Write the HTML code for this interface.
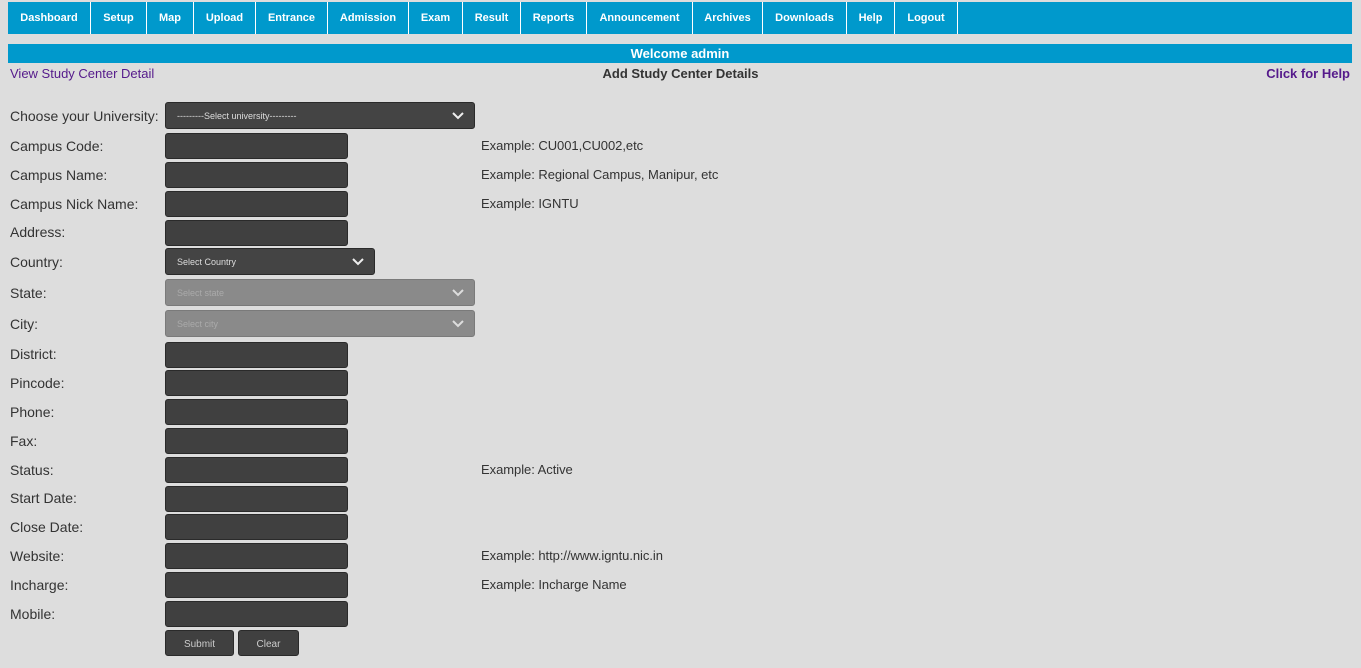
<!DOCTYPE html>
<html><head><style>
body{margin:0;width:1361px;height:668px;background:#dddddd;font-family:"Liberation Sans",sans-serif;position:relative;overflow:hidden}
.nav{position:absolute;left:8px;top:2px;width:1344px;height:32px;background:#0099cc}
.nav span{position:absolute;top:0;height:32px;line-height:33px;color:#fff;font-weight:bold;font-size:11px;text-align:center;border-right:1px solid #fff}
.a{position:absolute}
.lbl{position:absolute;left:10px;font-size:14px;color:#333}
.inp{position:absolute;left:165px;width:181px;height:24px;background:#404040;border:1px solid #2a2a2a;border-radius:3px}
.sel{position:absolute;left:165px;height:25px;background:#444;border:1px solid #2a2a2a;border-radius:3px;color:#ddd;font-size:9px;line-height:27px;padding-left:11px;box-sizing:content-box}
.sel.dis{background:#8a8a8a;border-color:#7a7a7a;color:#aaa}
.sel svg{position:absolute;right:10px;top:9px}
.ex{position:absolute;left:481px;font-size:13px;color:#333;letter-spacing:-0.05px}
.btn{position:absolute;top:630px;height:24px;background:#404040;border:1px solid #2a2a2a;border-radius:3px;color:#ccc;font-size:10px;text-align:center;line-height:27px}
</style></head><body>
<div class="nav">
<span style="left:0;width:82px">Dashboard</span>
<span style="left:83px;width:55px">Setup</span>
<span style="left:139px;width:46px">Map</span>
<span style="left:186px;width:61px">Upload</span>
<span style="left:248px;width:71px">Entrance</span>
<span style="left:320px;width:80px">Admission</span>
<span style="left:401px;width:53px">Exam</span>
<span style="left:455px;width:57px">Result</span>
<span style="left:513px;width:65px">Reports</span>
<span style="left:579px;width:105px">Announcement</span>
<span style="left:685px;width:69px">Archives</span>
<span style="left:755px;width:83px">Downloads</span>
<span style="left:839px;width:47px">Help</span>
<span style="left:887px;width:62px">Logout</span>
</div>
<div class="a" style="left:8px;top:44px;width:1344px;height:19px;background:#0099cc;color:#fff;font-weight:bold;font-size:13px;text-align:center;line-height:20px">Welcome admin</div>
<div class="a" style="left:10px;top:66px;font-size:13px;color:#551a8b">View Study Center Detail</div>
<div class="a" style="left:0;width:1361px;top:66px;font-size:13px;font-weight:bold;color:#333;text-align:center">Add Study Center Details</div>
<div class="a" style="right:11px;top:66px;font-size:13px;font-weight:bold;color:#551a8b">Click for Help</div>

<div class="lbl" style="top:108px">Choose your University:</div>
<div class="sel" style="top:102px;width:297px">---------Select university---------<svg width="12" height="8"><path d="M1 1l5 5 5-5" stroke="#eee" stroke-width="2" fill="none"/></svg></div>

<div class="lbl" style="top:138px">Campus Code:</div><div class="inp" style="top:133px"></div><div class="ex" style="top:138px">Example: CU001,CU002,etc</div>
<div class="lbl" style="top:167px">Campus Name:</div><div class="inp" style="top:162px"></div><div class="ex" style="top:167px">Example: Regional Campus, Manipur, etc</div>
<div class="lbl" style="top:196px">Campus Nick Name:</div><div class="inp" style="top:191px"></div><div class="ex" style="top:196px">Example: IGNTU</div>
<div class="lbl" style="top:224px">Address:</div><div class="inp" style="top:220px"></div>
<div class="lbl" style="top:254px">Country:</div>
<div class="sel" style="top:248px;width:197px">Select Country<svg width="12" height="8"><path d="M1 1l5 5 5-5" stroke="#eee" stroke-width="2" fill="none"/></svg></div>
<div class="lbl" style="top:285px">State:</div>
<div class="sel dis" style="top:279px;width:297px">Select state<svg width="12" height="8"><path d="M1 1l5 5 5-5" stroke="#ddd" stroke-width="2" fill="none"/></svg></div>
<div class="lbl" style="top:316px">City:</div>
<div class="sel dis" style="top:310px;width:297px">Select city<svg width="12" height="8"><path d="M1 1l5 5 5-5" stroke="#ddd" stroke-width="2" fill="none"/></svg></div>
<div class="lbl" style="top:346px">District:</div><div class="inp" style="top:342px"></div>
<div class="lbl" style="top:375px">Pincode:</div><div class="inp" style="top:370px"></div>
<div class="lbl" style="top:404px">Phone:</div><div class="inp" style="top:399px"></div>
<div class="lbl" style="top:433px">Fax:</div><div class="inp" style="top:428px"></div>
<div class="lbl" style="top:462px">Status:</div><div class="inp" style="top:457px"></div><div class="ex" style="top:462px">Example: Active</div>
<div class="lbl" style="top:490px">Start Date:</div><div class="inp" style="top:486px"></div>
<div class="lbl" style="top:519px">Close Date:</div><div class="inp" style="top:514px"></div>
<div class="lbl" style="top:548px">Website:</div><div class="inp" style="top:543px"></div><div class="ex" style="top:548px">Example: http://www.igntu.nic.in</div>
<div class="lbl" style="top:577px">Incharge:</div><div class="inp" style="top:572px"></div><div class="ex" style="top:577px">Example: Incharge Name</div>
<div class="lbl" style="top:606px">Mobile:</div><div class="inp" style="top:601px"></div>
<div class="btn" style="left:165px;width:67px">Submit</div>
<div class="btn" style="left:238px;width:59px">Clear</div>
</body></html>
